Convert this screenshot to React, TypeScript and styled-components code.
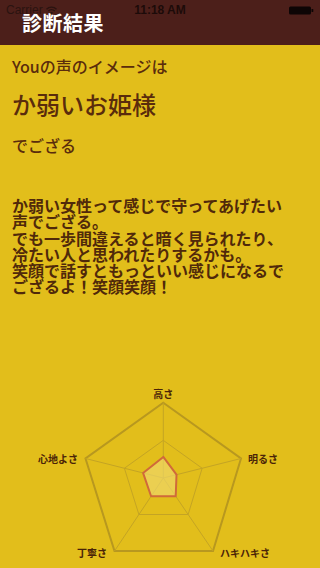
import styled, { createGlobalStyle } from 'styled-components';

const GlobalStyle = createGlobalStyle`
  html, body {
    margin: 0;
    padding: 0;
    background-color: #e2be1b;
  }
  * {
    box-sizing: border-box;
  }
`;

const jp = `"Noto Sans CJK JP", "Noto Sans", sans-serif`;

const Page = styled.div`
  width: 320px;
  height: 568px;
  overflow: hidden;
  background-color: #e2be1b;
  font-family: ${jp};
  color: #5a2c0c;
`;

const Header = styled.header`
  position: relative;
  height: 45px;
  background-color: #4c1f1a;
  display: flex;
  align-items: flex-start;
  padding: 9px 0 0 22px;
`;

const StatusBar = styled.div`
  position: absolute;
  top: 0;
  left: 0;
  right: 0;
  height: 20px;
  display: flex;
  align-items: center;
  justify-content: space-between;
  padding: 0 6px;
  font-family: "Liberation Sans", Arial, sans-serif;
  font-size: 12px;
  color: #2a1310;
`;

const Carrier = styled.div`
  display: flex;
  align-items: center;
  gap: 3px;
  width: 60px;
`;

const Clock = styled.div`
  font-weight: 700;
  color: #1c0b09;
`;

const Battery = styled.div`
  width: 60px;
  display: flex;
  justify-content: flex-end;
  align-items: center;
`;

const Title = styled.h1`
  margin: 0;
  font-size: 20px;
  line-height: 28px;
  font-weight: 700;
  color: #ffffff;
  letter-spacing: 0.5px;
`;

const Body = styled.main`
  padding: 0 12px;
`;

const Text = styled.p<{ $size: number; $gap: number }>`
  margin: ${(p) => p.$gap}px 0 0;
  font-size: ${(p) => p.$size}px;
  line-height: ${(p) => p.$size + 4}px;
  font-weight: 500;
`;

const Comment = styled.p`
  margin: 42px 0 0;
  font-size: 16px;
  line-height: 16.3px;
  font-weight: 700;
  color: #50290a;
  white-space: pre-line;
`;

const Chart = styled.svg`
  display: block;
  margin-top: 86px;
  width: 320px;
  height: 188px;
`;

const Label = styled.text`
  font-family: ${jp};
  font-size: 10px;
  font-weight: 700;
  fill: #4a2408;
`;

type Pt = [number, number];

const center: Pt = [163.3, 477];
const outer: Pt[] = [
  [163.3, 401.7],
  [241, 457.5],
  [213, 550],
  [114.5, 550],
  [85.5, 457.5],
];
const values = [0.28, 0.17, 0.25, 0.25, 0.26];
const labels: { text: string; x: number; y: number; anchor: 'start' | 'middle' | 'end' }[] = [
  { text: '高さ', x: 163.3, y: 397, anchor: 'middle' },
  { text: '明るさ', x: 248, y: 462, anchor: 'start' },
  { text: 'ハキハキさ', x: 220, y: 556, anchor: 'start' },
  { text: '丁寧さ', x: 107, y: 556, anchor: 'end' },
  { text: '心地よさ', x: 78, y: 462, anchor: 'end' },
];

const scale = (p: Pt, k: number): Pt => [
  center[0] + (p[0] - center[0]) * k,
  center[1] + (p[1] - center[1]) * k,
];
const toPoints = (pts: Pt[]) => pts.map((p) => p.join(',')).join(' ');

function Radar() {
  return (
    <Chart viewBox="0 380 320 188">
      <polygon points={toPoints(outer)} fill="none" stroke="#b8981f" strokeWidth={2} />
      <polygon points={toPoints(outer.map((p) => scale(p, 0.5)))} fill="none" stroke="#c4a424" strokeWidth={1} />
      {outer.map((p, i) => (
        <line key={i} x1={center[0]} y1={center[1]} x2={p[0]} y2={p[1]} stroke="#c4a424" strokeWidth={1} />
      ))}
      <polygon
        points={toPoints(outer.map((p, i) => scale(p, values[i])))}
        fill="rgba(240, 216, 110, 0.65)"
        stroke="#d06a3a"
        strokeWidth={2}
        strokeLinejoin="round"
      />
      {labels.map((l) => (
        <Label key={l.text} x={l.x} y={l.y} textAnchor={l.anchor}>
          {l.text}
        </Label>
      ))}
    </Chart>
  );
}

export default function App() {
  return (
    <>
      <GlobalStyle />
      <Page>
        <Header>
          <StatusBar>
            <Carrier>
              Carrier
              <svg width="11" height="9" viewBox="0 0 11 9">
                <path d="M0.5 3.2 A7 7 0 0 1 10.5 3.2" fill="none" stroke="#2a1310" strokeWidth="1.4" />
                <path d="M2.3 5 A4.5 4.5 0 0 1 8.7 5" fill="none" stroke="#2a1310" strokeWidth="1.4" />
                <path d="M5.5 8.6 L3.9 6.8 A2.2 2.2 0 0 1 7.1 6.8 Z" fill="#2a1310" />
              </svg>
            </Carrier>
            <Clock>11:18 AM</Clock>
            <Battery>
              <svg width="25" height="9" viewBox="0 0 25 9">
                <rect x="0" y="0.5" width="22" height="8" rx="1.5" fill="#0d0505" />
                <rect x="22.5" y="3" width="1.8" height="3" rx="0.6" fill="#0d0505" />
              </svg>
            </Battery>
          </StatusBar>
          <Title>診断結果</Title>
        </Header>
        <Body>
          <Text $size={16} $gap={10.5}>Youの声のイメージは</Text>
          <Text $size={24} $gap={14.5}>か弱いお姫様</Text>
          <Text $size={16} $gap={17}>でござる</Text>
          <Comment>
            {'か弱い女性って感じで守ってあげたい\n声でござる。\nでも一歩間違えると暗く見られたり、\n冷たい人と思われたりするかも。\n笑顔で話すともっといい感じになるで\nござるよ！笑顔笑顔！'}
          </Comment>
        </Body>
        <Radar />
      </Page>
    </>
  );
}
